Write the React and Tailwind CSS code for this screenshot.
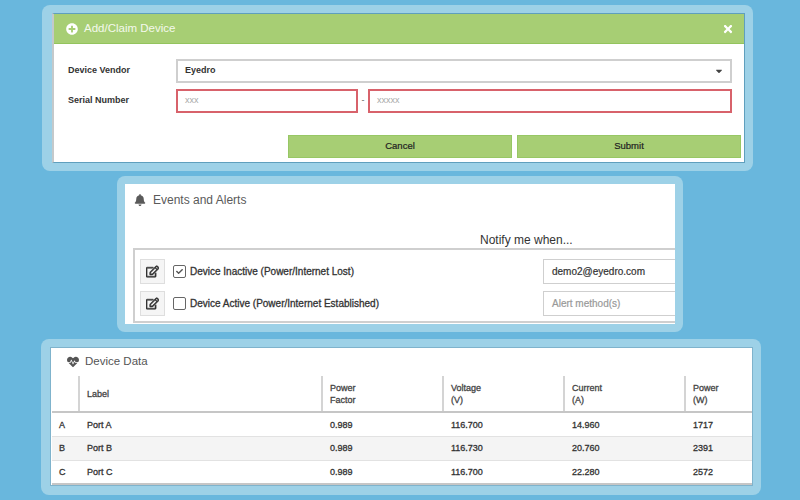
import React from "react";
import { FaPlusCircle, FaTimes, FaCaretDown, FaBell, FaRegEdit, FaHeartbeat, FaCheck } from "react-icons/fa";

function Frame({ className, innerClass, children }) {
  return (
    <div className={"rounded-lg bg-[#9dd1e7] p-[8px] " + className}>
      <div className={"h-full w-full overflow-hidden bg-white " + innerClass}>{children}</div>
    </div>
  );
}

function ClaimCard() {
  return (
    <Frame className="ml-[42px] h-[166px] w-[711px] pl-[10px]" innerClass="flex flex-col border border-[#5f9fbd] border-l-[2px] border-l-[#c4c9cb]">
      <div className="flex h-[30px] shrink-0 items-center border-b border-[#93c45d] bg-[#a7ce74] pl-[12px] pr-[10px] text-white">
        <FaPlusCircle className="text-[12px]" />
        <span className="ml-[6px] text-[11.5px] text-[#f4f9ec]">Add/Claim Device</span>
        <FaTimes className="ml-auto text-[12px]" />
      </div>
      <div className="flex items-center pl-[14px] pr-[12px] pt-[15px]">
        <span className="w-[108px] text-[9px] font-bold text-[#333]">Device Vendor</span>
        <div className="flex h-[24px] flex-1 items-center justify-between border-2 border-[#cfcfcf] pl-[7px] pr-[6px] text-[9px] font-bold text-[#333]">
          <span>Eyedro</span>
          <FaCaretDown className="text-[10px] text-[#444]" />
        </div>
      </div>
      <div className="flex items-center pl-[14px] pr-[12px] pt-[6px]">
        <span className="w-[108px] text-[9px] font-bold text-[#333]">Serial Number</span>
        <div className="flex h-[24px] w-[182px] items-center border-2 border-[#d8626b] pl-[7px] text-[9px] text-[#a9a9a9]">xxx</div>
        <span className="w-[10px] text-center text-[9px] text-[#666]">-</span>
        <div className="flex h-[24px] flex-1 items-center border-2 border-[#d8626b] pl-[7px] text-[9px] text-[#a9a9a9]">xxxxx</div>
      </div>
      <div className="flex justify-end gap-[5px] pr-[3px] pt-[22px]">
        <div className="flex h-[23px] w-[224px] items-center justify-center border border-[#97c765] bg-[#a7ce74] text-[9.5px] text-[#222] [-webkit-text-stroke:0.2px_#222]">Cancel</div>
        <div className="flex h-[23px] w-[224px] items-center justify-center border border-[#97c765] bg-[#a7ce74] text-[9.5px] text-[#222] [-webkit-text-stroke:0.2px_#222]">Submit</div>
      </div>
    </Frame>
  );
}

function AlertRow({ checked, label, value, placeholder }) {
  return (
    <div className="flex items-center">
      <div className="flex h-[25px] w-[25px] items-center justify-center border border-[#dedede] bg-[#f5f5f5] text-[#333]">
        <FaRegEdit className="text-[13px] [stroke-width:24px] stroke-[#333]" />
      </div>
      <div className="ml-[8px] flex h-[13px] w-[13px] items-center justify-center rounded-[2px] border border-[#666] text-[#555]">
        {checked && <FaCheck className="text-[7px]" />}
      </div>
      <span className="ml-[4px] w-[353px] text-[10px] font-medium text-[#333] [-webkit-text-stroke:0.3px_#333]">{label}</span>
      <div className={"flex h-[25px] w-[160px] shrink-0 items-center border border-[#cfcfcf] pl-[8px] text-[10px] " + (placeholder ? "text-[#999] [-webkit-text-stroke:0.2px_#999]" : "text-[#333] [-webkit-text-stroke:0.2px_#333]")}>
        {value || placeholder}
      </div>
    </div>
  );
}

function AlertsCard() {
  return (
    <Frame className="ml-[117px] mt-[5px] h-[156px] w-[566px]" innerClass="flex flex-col">
      <div className="flex h-[32px] shrink-0 items-center pl-[9px] text-[#5a5a5a]">
        <FaBell className="text-[12px]" />
        <span className="ml-[7px] text-[12px]">Events and Alerts</span>
      </div>
      <div className="h-[32px] shrink-0 pl-[355px] pt-[16px] text-[12px] leading-[16px] text-[#333]">Notify me when...</div>
      <div className="ml-[8px] flex w-[600px] flex-col gap-[7px] border-2 border-[#cfcfcf] pb-[5px] pl-[5px] pt-[9px]">
        <AlertRow checked label="Device Inactive (Power/Internet Lost)" value="demo2@eyedro.com" />
        <AlertRow label="Device Active (Power/Internet Established)" placeholder="Alert method(s)" />
      </div>
    </Frame>
  );
}

const rows = [
  ["A", "Port A", "0.989", "116.700", "14.960", "1717"],
  ["B", "Port B", "0.989", "116.730", "20.760", "2391"],
  ["C", "Port C", "0.989", "116.700", "22.280", "2572"],
];

function Head({ children }) {
  return (
    <th className="border-b-2 border-l-2 border-b-[#c6c6c6] border-l-[#d4d4d4] pl-[7px] text-left align-middle text-[9px] font-normal leading-[12px] text-[#444] [-webkit-text-stroke:0.3px_#444]">
      {children}
    </th>
  );
}

function DataCard() {
  return (
    <Frame className="ml-[41px] mt-[7px] h-[156px] w-[720px] pl-[9px] pb-[9px]" innerClass="flex flex-col border border-[#7fb3cc] pl-[1px]">
      <div className="flex h-[28px] shrink-0 items-center pl-[15px] text-[#555]">
        <FaHeartbeat className="text-[12px]" />
        <span className="ml-[6px] text-[11.5px]">Device Data</span>
      </div>
      <table className="w-full table-fixed border-collapse">
        <colgroup>
          <col className="w-[27px]" />
          <col className="w-[243px]" />
          <col className="w-[121px]" />
          <col className="w-[121px]" />
          <col className="w-[121px]" />
          <col />
        </colgroup>
        <thead>
          <tr className="h-[36px]">
            <th className="border-b-2 border-b-[#c6c6c6]"></th>
            <Head>Label</Head>
            <Head>Power<br />Factor</Head>
            <Head>Voltage<br />(V)</Head>
            <Head>Current<br />(A)</Head>
            <Head>Power<br />(W)</Head>
          </tr>
        </thead>
        <tbody>
          {rows.map((r, i) => (
            <tr key={r[0]} className={"h-[24px] text-[9px] font-normal text-[#333] [-webkit-text-stroke:0.3px_#333] " + (i === 1 ? "bg-[#f4f4f4] " : "") + (i === 2 ? "border-b-2 border-b-[#c6c6c6]" : "border-b border-b-[#e2e2e2]")}>
              {r.map((c, j) => (
                <td key={j} className={(j === 0 ? "pl-[7px]" : "pl-[8px]") + " pt-[2px]"}>{c}</td>
              ))}
            </tr>
          ))}
        </tbody>
      </table>
    </Frame>
  );
}

export default function App() {
  return (
    <div className="h-[500px] w-[800px] overflow-hidden bg-[#69b7dd] pt-[5px] font-['Liberation_Sans',Arial,sans-serif]">
      <ClaimCard />
      <AlertsCard />
      <DataCard />
    </div>
  );
}
